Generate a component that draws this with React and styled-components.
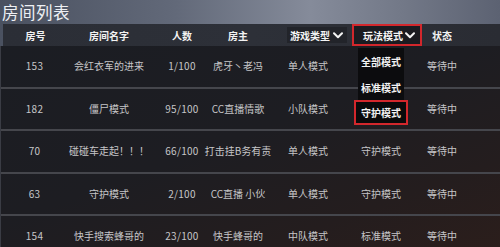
import React from "react";
import styled, { createGlobalStyle } from "styled-components";

const Global = createGlobalStyle`
  html, body { margin: 0; padding: 0; }
  body {
    width: 500px;
    height: 247px;
    overflow: hidden;
    background: #1d1e23;
    font-family: "Noto Sans CJK SC", "Noto Sans", sans-serif;
  }
`;

const Page = styled.div`
  position: relative;
  width: 500px;
  height: 247px;
  overflow: hidden;
  display: flex;
  flex-direction: column;
  background: linear-gradient(90deg, #4a5160 0%, #626979 35%, #858b9a 62%, #737988 80%, #5c6272 100%);
`;

const Title = styled.div`
  height: 24px;
  padding-left: 2px;
  font-size: 16.5px;
  line-height: 24px;
  color: #eef0f4;
  white-space: nowrap;
  letter-spacing: 0.5px;
`;

const HeaderBar = styled.div`
  height: 22px;
  margin-left: 3px;
  display: grid;
  grid-template-columns: 65px 82px 64px 48px 92px 54px 68px 24px;
  align-items: center;
  justify-items: center;
  background: linear-gradient(90deg, #2b2e36, #2d3038 50%, #2a2c33);
  color: #f2f2f2;
  font-size: 10px;
  font-weight: 700;
  position: relative;
`;

const HeadCell = styled.div`
  white-space: nowrap;
`;

const Select = styled.div`
  justify-self: end;
  margin-right: 7px;
  height: 16px;
  width: 60px;
  box-sizing: border-box;
  padding: 0 4px 0 3px;
  display: flex;
  align-items: center;
  justify-content: space-between;
  background: #22242a;
  color: #f4f4f4;
`;

const ModeBox = styled.div`
  justify-self: start;
  margin-left: -2px;
  position: relative;
  height: 22px;
  width: 70px;
  box-sizing: border-box;
  border: 2px solid #d2272c;
  padding: 0 5px 0 9px;
  display: flex;
  align-items: center;
  justify-content: space-between;
  background: #1b1c21;
  color: #f6f6f6;
  z-index: 3;
`;

const Dropdown = styled.div`
  position: absolute;
  left: 4px;
  top: 22px;
  width: 46px;
  display: flex;
  flex-direction: column;
  background: #0c0c0e;
  font-weight: 700;
`;

const DropItem = styled.div`
  height: 26px;
  display: flex;
  align-items: center;
  justify-content: center;
  color: #f2f2f2;
  font-size: 10px;
  box-sizing: border-box;
  white-space: nowrap;
  ${(p) =>
    p.$active &&
    `
    margin: 0 -4px;
    height: 25px;
    border: 2px solid #d2272c;
    background: #0a0a0b;
  `}
`;

const Accent = styled.div`
  height: 2px;
  background: linear-gradient(90deg, #8e6450, #a77660 50%, #9a6c56);
`;

const Body = styled.div`
  flex: 1;
  background: linear-gradient(160deg, #1b1d23 0%, #1d1d22 45%, #241d1e 75%, #2c1e1b 100%);
  border-left: 1px solid #3a3c44;
`;

const Row = styled.div`
  height: 42.5px;
  box-sizing: border-box;
  border-bottom: 2px solid #45464c;
  display: grid;
  grid-template-columns: 67px 82px 64px 48px 92px 54px 68px 24px;
  align-items: center;
  justify-items: center;
  color: #c6c6c8;
  font-size: 10px;
  padding-bottom: 1px;
`;

const Cell = styled.div`
  white-space: nowrap;
  letter-spacing: ${(p) => (p.$num ? "0.3px" : "0")};
`;

const Chevron = () => (
  <svg width="10" height="7" viewBox="0 0 10 7">
    <path d="M1 1.2 L5 5.2 L9 1.2" fill="none" stroke="#f4f4f4" strokeWidth="2" strokeLinecap="round" strokeLinejoin="round" />
  </svg>
);

const rows = [
  ["153", "会红衣军的进来", "1/100", "虎牙丶老冯", "单人模式", "", "等待中"],
  ["182", "僵尸模式", "95/100", "CC直播情歌", "小队模式", "", "等待中"],
  ["70", "碰碰车走起！！！", "66/100", "打击挂B务有责", "单人模式", "守护模式", "等待中"],
  ["63", "守护模式", "2/100", "CC直播 小伙", "单人模式", "守护模式", "等待中"],
  ["154", "快手搜索蜂哥的", "23/100", "快手蜂哥的", "中队模式", "标准模式", "等待中"],
];

export default function App() {
  return (
    <>
      <Global />
      <Page>
        <Title>房间列表</Title>
        <HeaderBar>
          <HeadCell>房号</HeadCell>
          <HeadCell>房间名字</HeadCell>
          <HeadCell>人数</HeadCell>
          <HeadCell>房主</HeadCell>
          <Select>
            <span>游戏类型</span>
            <Chevron />
          </Select>
          <ModeBox>
            <span>玩法模式</span>
            <Chevron />
            <Dropdown>
              <DropItem>全部模式</DropItem>
              <DropItem>标准模式</DropItem>
              <DropItem $active>守护模式</DropItem>
            </Dropdown>
          </ModeBox>
          <HeadCell>状态</HeadCell>
        </HeaderBar>
        <Accent />
        <Body>
          {rows.map((r, i) => (
            <Row key={i}>
              {r.map((c, j) => (
                <Cell key={j} $num={j === 0 || j === 2}>
                  {c}
                </Cell>
              ))}
            </Row>
          ))}
        </Body>
      </Page>
    </>
  );
}
